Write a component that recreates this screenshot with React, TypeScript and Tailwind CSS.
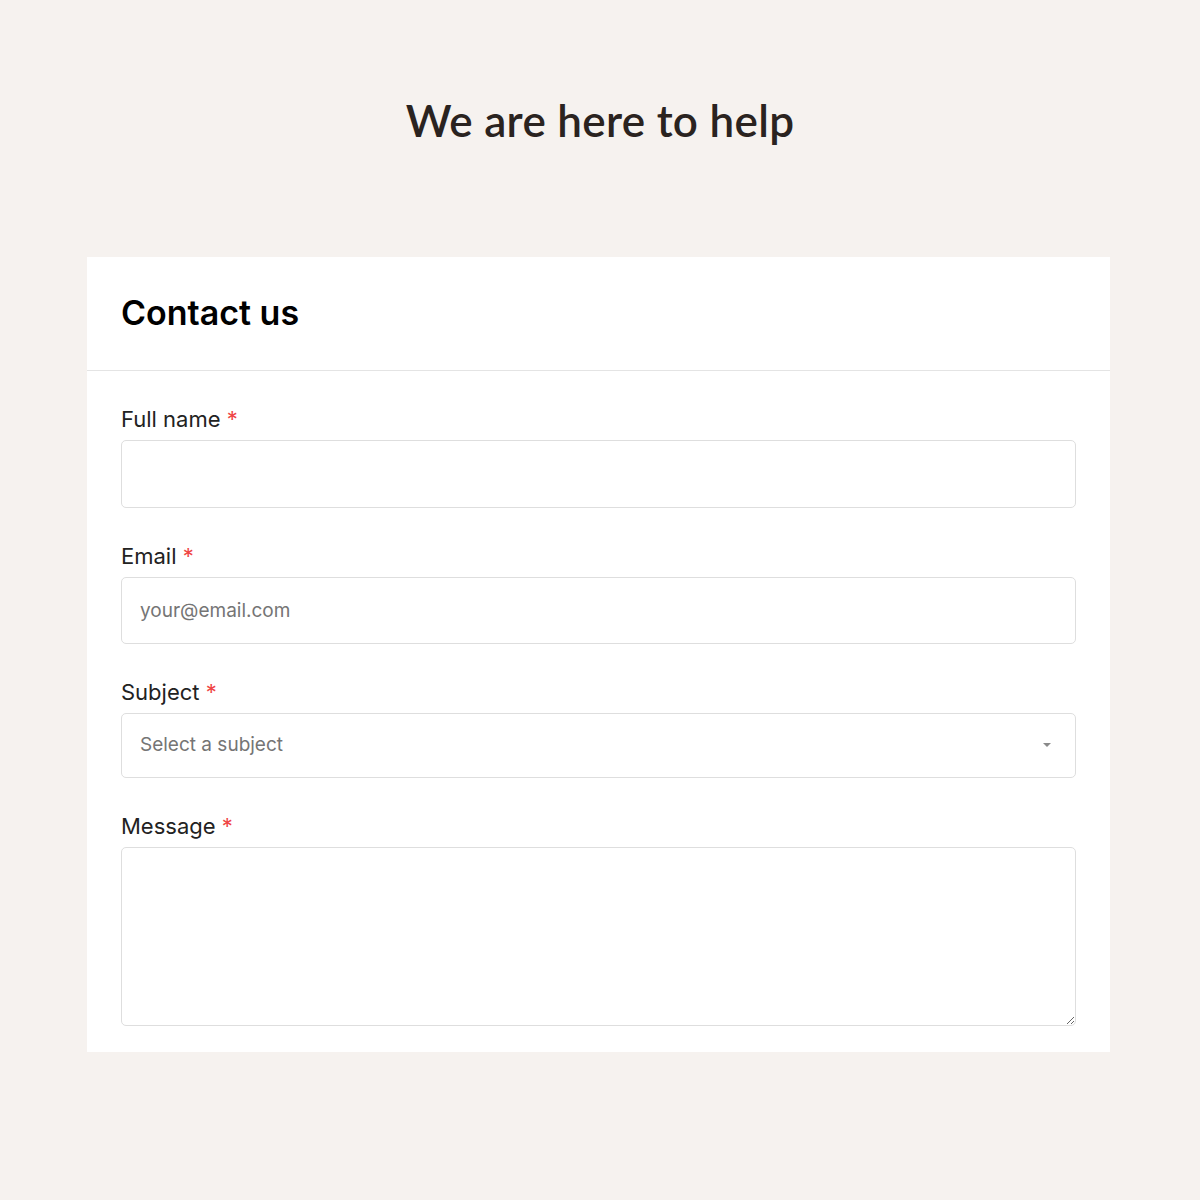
export default function App() {
  return (
    <div className="min-h-[1200px] bg-[#f6f2ef] font-['Inter',sans-serif]">
      {/* Heading */}
      <div className="pt-[95px] text-center">
        <h1 className="font-['Lato',sans-serif] text-[44px] font-semibold leading-[50px] tracking-[0.3px] text-[#2a2320]">
          We are here to help
        </h1>
      </div>

      {/* Card */}
      <div className="ml-[87px] mt-[112px] w-[1023px] bg-white">
        <div className="border-b border-[#e4e4e4] px-[34px] pb-[37px] pt-[36px]">
          <h2 className="text-[34px] font-semibold leading-[40px] text-black">
            Contact us
          </h2>
        </div>

        <form className="flex flex-col gap-[33px] px-[34px] pb-[26px] pt-[33px]">
          <Field label="Full name">
            <input
              type="text"
              className="h-[68px] w-full rounded-[5px] border border-[#dedede] px-[18px] text-[19px] outline-none"
            />
          </Field>

          <Field label="Email">
            <input
              type="email"
              placeholder="your@email.com"
              className="h-[67px] w-full rounded-[5px] border border-[#dedede] px-[18px] text-[19px] text-[#333] outline-none placeholder:text-[#757575]"
            />
          </Field>

          <Field label="Subject">
            <div className="relative">
              <div className="flex h-[65px] w-full items-center rounded-[5px] border border-[#dedede] px-[18px] text-[19px] text-[#757575]">
                Select a subject
              </div>
              <div className="absolute right-[25px] top-[30px] h-0 w-0 border-x-[4px] border-t-[4px] border-x-transparent border-t-[#8a8a8a]" />
            </div>
          </Field>

          <Field label="Message">
            <textarea className="block h-[179px] w-full resize-y rounded-[5px] border border-[#dedede] px-[18px] py-[14px] text-[19px] outline-none" />
          </Field>
        </form>
      </div>
    </div>
  );
}

function Field({ label, children }: { label: string; children: React.ReactNode }) {
  return (
    <div className="flex flex-col gap-[6px]">
      <label className="text-[22px] leading-[30px] text-[#222]">
        {label} <span className="text-[#ef4444]">*</span>
      </label>
      {children}
    </div>
  );
}
